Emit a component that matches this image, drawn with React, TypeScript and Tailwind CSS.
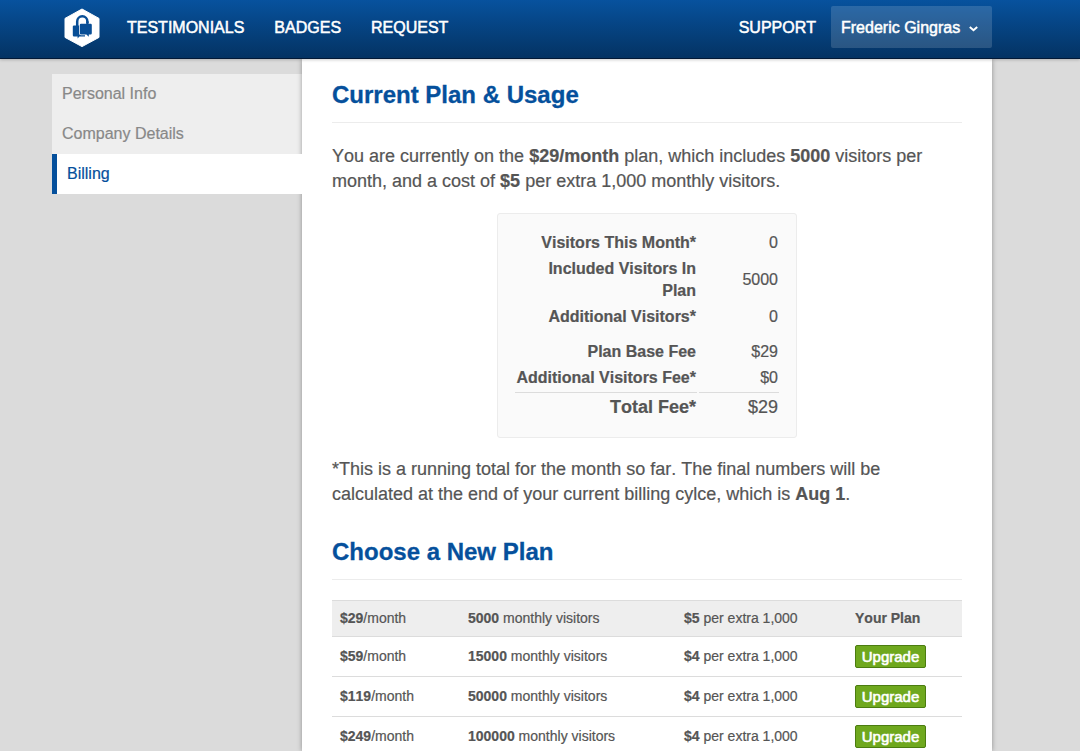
import React from "react";

const navLinks = ["TESTIMONIALS", "BADGES", "REQUEST"];

const plans = [
  { price: "$29", visitors: "5000", extra: "$5", current: true },
  { price: "$59", visitors: "15000", extra: "$4", current: false },
  { price: "$119", visitors: "50000", extra: "$4", current: false },
  { price: "$249", visitors: "100000", extra: "$4", current: false },
];

function Logo() {
  return (
    <svg width="36" height="40" viewBox="0 0 36 40" className="block [-webkit-text-stroke:0]">
      <path d="M18 1 35 10.4V29.4L18 38.6 1 29.4V10.4Z" fill="#fff" stroke="#fff" strokeWidth="1" strokeLinejoin="round" />
      <path d="M13.2 18V13.4a5.1 5.1 0 0 1 10.2 0V17" fill="none" stroke="#084e96" strokeWidth="2.5" />
      <path d="M10 17.4H21V28.4H15.4L13.6 30.4V28.4H10Q8.8 28.4 8.8 27.2V18.6Q8.8 17.4 10 17.4Z" fill="#084e96" />
      <path d="M17 15.8H26.6Q27.8 15.8 27.8 17V25.2Q27.8 26.4 26.6 26.4H24.8V28.8L22.4 26.4H17Q15.8 26.4 15.8 25.2V17Q15.8 15.8 17 15.8Z" fill="#084e96" stroke="#fff" strokeWidth="1.5" paintOrder="stroke" />
      <path d="M22.2 17V13.4H24.6V17Z" fill="#084e96" />
    </svg>
  );
}

function Heading({ children }: { children: React.ReactNode }) {
  return (
    <h2 className="h-[43px] border-b border-[#ececec] text-[24px] leading-[30px] font-bold text-[#05509c] [-webkit-text-stroke:0.3px_#05509c]">
      {children}
    </h2>
  );
}

function UsageRow({ label, value, className }: { label: React.ReactNode; value: string; className: string }) {
  return (
    <div className={`flex items-center justify-between ${className}`}>
      <span className="w-[181px] text-right font-bold whitespace-nowrap">{label}</span>
      <span>{value}</span>
    </div>
  );
}

export default function App() {
  return (
    <div className="flex h-[751px] w-[1080px] flex-col overflow-hidden bg-[#dbdbdb] font-['Liberation_Sans',Arial,sans-serif] text-[#555] [font-kerning:none] [-webkit-text-stroke:0.2px]">
      <header className="relative z-10 h-[59px] shrink-0 border-b border-[#031936] bg-linear-to-b from-[#07529e] to-[#043363] shadow-[0_1px_3px_rgba(0,0,0,0.2)]">
        <div className="mx-auto flex h-[54px] w-[960px] items-center pr-[28px] text-[16px] leading-[20px] text-white [-webkit-text-stroke:0.5px_white]">
          <div className="ml-[4px] w-[63px] pt-[2px]">
            <Logo />
          </div>
          <nav className="flex gap-[30px] pt-[2px]">
            {navLinks.map((link) => (
              <a key={link}>{link}</a>
            ))}
          </nav>
          <a className="mr-[15px] ml-auto pt-[2px]">SUPPORT</a>
          <button className="flex h-[42px] w-[161px] items-center rounded-[2px] bg-white/15 pt-[2px] pl-[10px]">
            Frederic Gingras
            <svg width="9" height="6" viewBox="0 0 9 6" className="mt-px ml-[9px]">
              <path d="M.8 1 4.5 4.2 8.2 1" fill="none" stroke="#fff" strokeWidth="2" />
            </svg>
          </button>
        </div>
      </header>

      <div className="flex flex-1 pl-[52px]">
        <aside className="w-[250px] shrink-0 pt-[15px] text-[16px] leading-[40px] text-[#888]">
          <a className="block h-[40px] bg-[#eee] pl-[10px]">Personal Info</a>
          <a className="block h-[40px] bg-[#eee] pl-[10px]">Company Details</a>
          <a className="relative z-[2] block h-[40px] border-l-5 border-[#05509c] bg-white pl-[10px] text-[#05509c]">Billing</a>
        </aside>

        <main className="h-[692px] w-[690px] shrink-0 bg-white px-[30px] pt-[21px] shadow-[0_0_5px_rgba(0,0,0,0.35)]">
          <Heading>Current Plan &amp; Usage</Heading>
          <p className="mt-[21px] text-[18px] leading-[25px] whitespace-nowrap">
            You are currently on the <b>$29/month</b> plan, which includes <b>5000</b> visitors per
            <br />
            month, and a cost of <b>$5</b> per extra 1,000 monthly visitors.
          </p>

          <section className="mx-auto mt-[19px] h-[225px] w-[300px] rounded-[3px] border border-[#ececec] bg-[#fafafa] px-[17px] pt-[16px] text-[16px] leading-[22px]">
            <UsageRow label="Visitors This Month*" value="0" className="h-[26px] pr-[1px]" />
            <UsageRow label={<>Included Visitors In<br />Plan</>} value="5000" className="h-[48px] pr-[1px]" />
            <UsageRow label="Additional Visitors*" value="0" className="h-[26px] pr-[1px]" />
            <UsageRow label="Plan Base Fee" value="$29" className="mt-[9px] h-[26px] pr-[1px]" />
            <UsageRow label="Additional Visitors Fee*" value="$0" className="h-[26px] pr-[1px]" />
            <div className="mt-px flex gap-[2px]">
              <span className="h-px w-[182px] bg-[#dcdcdc]" />
              <span className="h-px flex-1 bg-[#dcdcdc]" />
            </div>
            <UsageRow label="Total Fee*" value="$29" className="h-[28px] pr-[1px] text-[18px]" />
          </section>

          <p className="mt-[19px] text-[18px] leading-[25px] whitespace-nowrap">
            *This is a running total for the month so far. The final numbers will be
            <br />
            calculated at the end of your current billing cylce, which is <b>Aug 1</b>.
          </p>

          <div className="mt-[30px]">
            <Heading>Choose a New Plan</Heading>
          </div>

          <div className="mt-[20px] text-[14px] leading-[20px]">
            {plans.map((plan) => (
              <div
                key={plan.price}
                className={`grid grid-cols-[128px_216px_171px_1fr] items-center border-t border-[#dcdcdc] pl-[8px] ${plan.current ? "h-[36px] bg-[#eee]" : "h-[40px]"}`}
              >
                <span className="pb-[2px]"><b>{plan.price}</b>/month</span>
                <span className="pb-[2px]"><b>{plan.visitors}</b> monthly visitors</span>
                <span className="pb-[2px]"><b>{plan.extra}</b> per extra 1,000</span>
                {plan.current ? (
                  <b className="pb-[2px]">Your Plan</b>
                ) : (
                  <button className="h-[23px] w-[71px] rounded-[2px] border border-[#4b7c10] bg-[#6fa81e] pt-px text-[15px] leading-[20px] text-white [-webkit-text-stroke:0.6px_white]">
                    Upgrade
                  </button>
                )}
              </div>
            ))}
          </div>
        </main>
      </div>
    </div>
  );
}
